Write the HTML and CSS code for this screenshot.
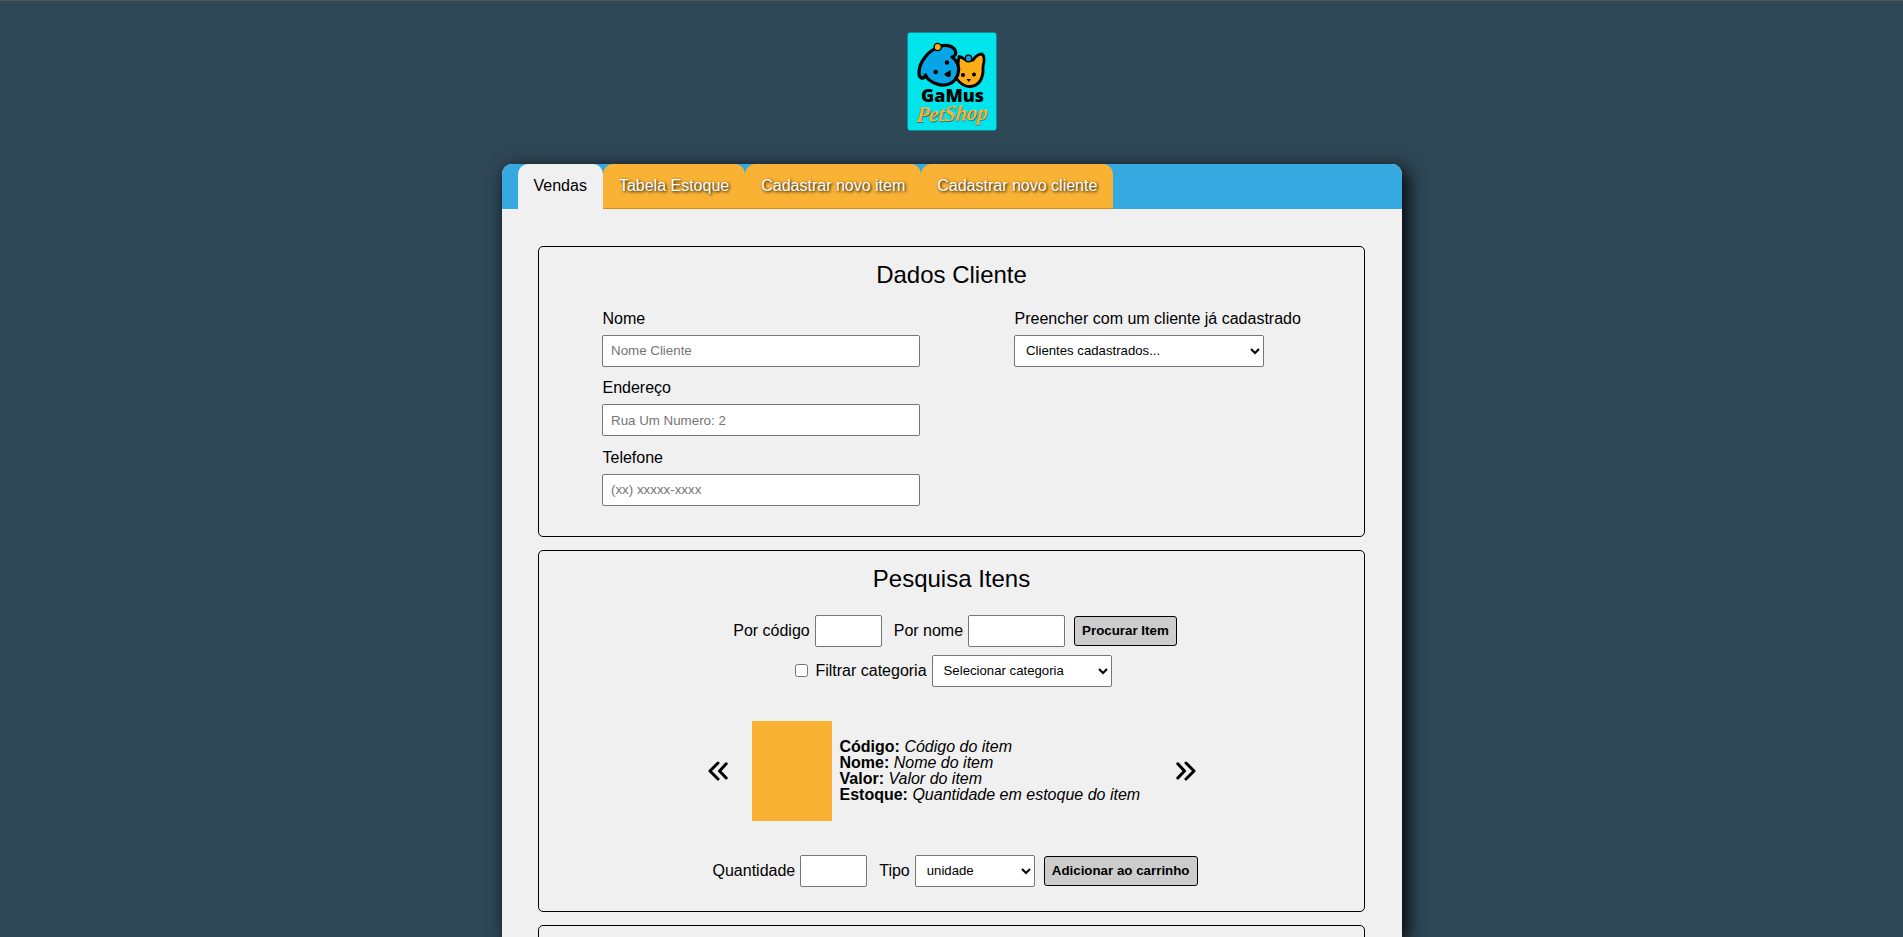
FILE: index.html
```html
<!DOCTYPE html>
<html lang="pt-BR">
<head>
<meta charset="utf-8">
<title>GaMus PetShop</title>
<link rel="stylesheet" href="styles.css">
</head>
<body>
<header class="header">
  <svg class="logo" viewBox="0 0 90 99" width="90" height="99">
    <rect x=".25" y=".25" width="89.500" height="98.500" rx="3" fill="#00e4ec" stroke="#173f4a" stroke-width=".5"/>
    <path d="M52 24.500C55 25 57 27 59 28H66C68 25 71 22 75 22C78 24 77 31 76 35L76 40C75 49 70 54 63 54.500C56 55 52 50 49 46Z" fill="#fbad18" stroke="#000" stroke-width="2.800" stroke-linejoin="round"/>
    <circle cx="61.500" cy="26.500" r="3.300" fill="#079fe0" stroke="#000" stroke-width="1.300"/>
    <path d="M31 15.500C36 12 46 13 48.500 19C49.500 22 48 24.500 45 25C51 29 53 36 51 42C48 52 38 55 30 52C24 50 20 47 18.500 43C17 48 12 47 12 41C12 30 21 19 31 15.500Z" fill="#08a5e6" stroke="#000" stroke-width="3.200" stroke-linejoin="round"/>
    <circle cx="30.700" cy="15" r="3.600" fill="#fbad18" stroke="#000" stroke-width="1.300"/>
    <circle cx="40" cy="30.500" r="2.300"/><circle cx="28.700" cy="40" r="2.300"/>
    <path d="M37 42L43.500 38Q44.500 43 43 45Q39 45.500 37 42Z"/>
    <circle cx="56" cy="43" r="2"/><circle cx="67" cy="42.500" r="2"/>
    <path d="M59.500 47H64L61.800 50Z"/>
    <text class="brand" x="14" y="69.500" textLength="63" lengthAdjust="spacingAndGlyphs">GaMus</text>
    <g transform="translate(9 90) rotate(-2) skewX(-8)">
      <text class="script shade" x="1" y="1" textLength="71" lengthAdjust="spacingAndGlyphs">PetShop</text>
      <text class="script" x="0" y="0" textLength="71" lengthAdjust="spacingAndGlyphs">PetShop</text>
    </g>
  </svg>
</header>
<main class="panel">
  <nav class="tabs">
    <a class="tab active">Vendas</a>
    <a class="tab">Tabela Estoque</a>
    <a class="tab">Cadastrar novo item</a>
    <a class="tab">Cadastrar novo cliente</a>
  </nav>
  <div class="content">
    <section class="card client">
      <h2>Dados Cliente</h2>
      <div class="columns">
        <div class="column">
          <label>Nome</label><input type="text" placeholder="Nome Cliente">
          <label>Endereço</label><input type="text" placeholder="Rua Um Numero: 2">
          <label>Telefone</label><input type="text" placeholder="(xx) xxxxx-xxxx">
        </div>
        <div class="column">
          <label>Preencher com um cliente já cadastrado</label>
          <select class="registered"><option>Clientes cadastrados...</option></select>
        </div>
      </div>
    </section>
    <section class="card search">
      <h2>Pesquisa Itens</h2>
      <div class="row by-code">
        <label>Por código</label><input class="short" type="text">
        <label class="next">Por nome</label><input class="name" type="text">
        <button>Procurar Item</button>
      </div>
      <div class="row filter">
        <input type="checkbox"><label>Filtrar categoria</label>
        <select class="category"><option>Selecionar categoria</option></select>
      </div>
      <div class="item">
        <svg class="arrow" viewBox="0 0 20 20" width="20" height="20"><path d="M10 2L2 10L10 18M18.200 2.800L11.500 10L18.200 17"/></svg>
        <div class="photo"></div>
        <div class="details">
          <p><b>Código:</b> <i>Código do item</i></p>
          <p><b>Nome:</b> <i>Nome do item</i></p>
          <p><b>Valor:</b> <i>Valor do item</i></p>
          <p><b>Estoque:</b> <i>Quantidade em estoque do item</i></p>
        </div>
        <svg class="arrow" viewBox="0 0 20 20" width="20" height="20"><path d="M10 2L18 10L10 18M1.800 2.800L8.500 10L1.800 17"/></svg>
      </div>
      <div class="row amount">
        <label>Quantidade</label><input class="short" type="text">
        <label class="next">Tipo</label>
        <select class="unit"><option>unidade</option></select>
        <button>Adicionar ao carrinho</button>
      </div>
    </section>
    <section class="card cart"></section>
  </div>
</main>
</body>
</html>
```
FILE: styles.css
```css
* { box-sizing: border-box; margin: 0; padding: 0; }
body {
  height: 937px;
  overflow: hidden;
  background: #2f4858;
  border-top: 1px solid #555;
  font: 16px/16px "Liberation Sans", Arial, sans-serif;
  color: #000;
}
.header { height: 163px; padding-top: 31px; }
.logo { display: block; margin: 0 auto; }
.brand { font: 800 18px "Open Sans", sans-serif; }
.script { font: italic 700 22px "Liberation Serif", serif; fill: #f9b233; }
.shade { fill: #28747a; }
.panel {
  width: 900px;
  height: 773px;
  overflow: hidden;
  margin: 0 auto;
  background: #f0f0f0;
  border-radius: 10px 10px 0 0;
  box-shadow: 5px 5px 20px #000;
}
.tabs {
  display: flex;
  height: 45px;
  padding-left: 16px;
  background: #36a9e1;
  border-radius: 10px 10px 0 0;
}
.tab {
  padding: 14px 16px 0;
  background: #f9b233;
  border-bottom: 1px solid #d58e12;
  border-radius: 10px 10px 0 0;
  color: #fff;
  text-shadow: 1px 1px 3px #000;
  white-space: nowrap;
}
.tab.active { background: #f0f0f0; border-color: #f0f0f0; color: #000; text-shadow: none; }
.content { padding: 37px 37px 0 36px; }
.card { border: 1px solid #000; border-radius: 5px; margin-bottom: 13px; }
.client { height: 291px; }
.search { height: 362px; }
.cart { height: 300px; }
h2 { padding: 15px 0 0 1px; font-size: 24px; font-weight: 400; line-height: 26px; text-align: center; }
.columns { display: flex; gap: 94px; padding: 22.700px 0 0 63.500px; }
.column { display: flex; flex-direction: column; align-items: flex-start; }
.column label { margin-bottom: 8px; padding-left: .5px; }
input, select, button { font: 13.333px "Liberation Sans", Arial, sans-serif; }
input[type="text"], select {
  height: 32px;
  padding: 0 8px;
  background: #fff;
  border: 1px solid #767676;
  border-radius: 2px;
  color: #000;
}
input[type="text"]::placeholder { color: #757575; }
.row select, .column select { padding: 0 7px 1px; font-size: 13.200px; }
.column input { width: 318px; margin-bottom: 13.600px; }
.registered { width: 250px; }
.row { display: flex; align-items: center; justify-content: center; }
.row label { margin-right: 5px; }
.row .next { margin-left: 12px; }
.short { width: 67px; }
.name { width: 97px; }
.category { width: 180px; }
.unit { width: 120px; }
button {
  height: 30px;
  margin-left: 9px;
  padding: 0 7px 2px;
  background: #ccc;
  border: 1px solid #000;
  border-radius: 3px;
  font-weight: 700;
  color: #000;
}
.by-code { margin-top: 23px; padding-left: 8px; }
.filter { margin-top: 8px; padding-left: 5px; }
.filter input { width: 13px; height: 13px; margin: 0 7px 1px 0; }
.item { display: flex; align-items: center; justify-content: center; margin-top: 34px; padding-left: 1px; }
.photo { width: 80px; height: 100px; margin: 0 8px 0 24px; background: #f9b233; }
.details { width: 336px; }
.arrow { fill: none; stroke: #000; stroke-width: 3; stroke-linecap: round; stroke-linejoin: round; }
.amount { margin-top: 34px; padding-left: 8px; }
```
